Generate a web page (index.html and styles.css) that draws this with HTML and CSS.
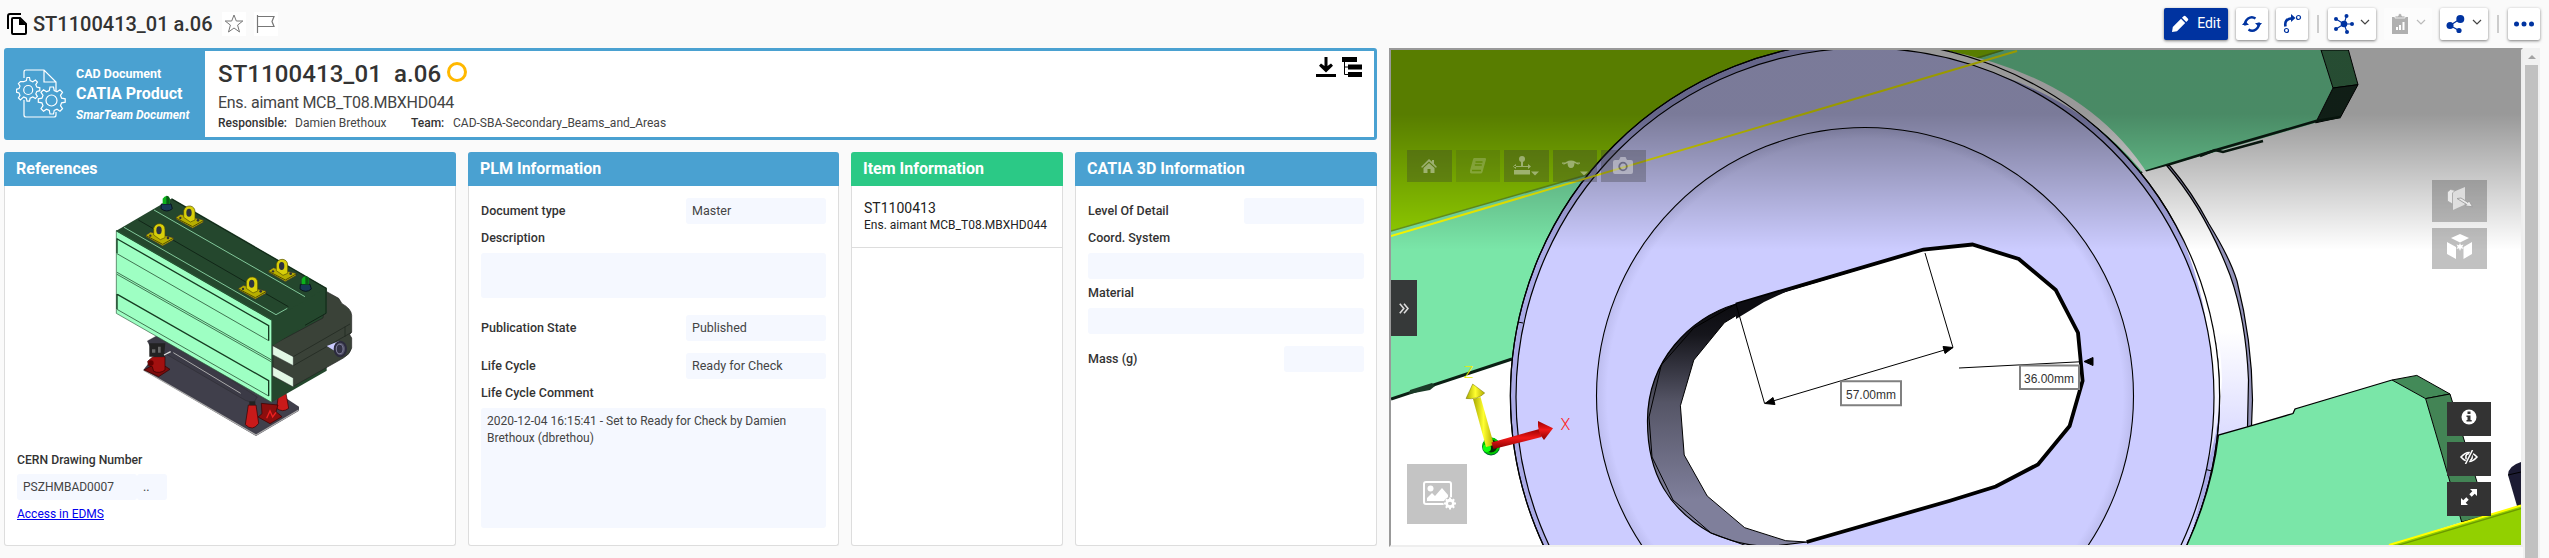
FILE: index.html
```html
<!DOCTYPE html>
<html lang="en">
<head>
<meta charset="utf-8">
<title>ST1100413_01 a.06</title>
<link rel="stylesheet" href="styles.css">
</head>
<body>
<header class="topbar">
  <svg class="ic-copy" width="20" height="22" viewBox="0 0 20 22"><path d="M1 16V3q0-2 2-2h11" fill="none" stroke="#000" stroke-width="2"/><path d="M6 5h7l6 6v9q0 1-1 1H6q-1 0-1-1V6q0-1 1-1z" fill="#fff" stroke="#000" stroke-width="2"/><path d="M12 5v7h7z"/></svg>
  <h1 class="page-title">ST1100413_01 a.06</h1>
  <span class="mini star"><svg width="24" height="24" viewBox="0 0 24 24"><path d="M12 3l2.300 6h6.500l-5.200 4.100 1.900 6.900-5.500-4-5.500 4 1.900-6.900L3.200 9h6.500z" fill="none" stroke="#777"/></svg></span>
  <span class="mini"><svg width="24" height="24" viewBox="0 0 24 24"><path d="M3.500 3v18M3.500 4.500H20l-2 5 2 5H3.500" fill="none" stroke="#777" stroke-width="1.200"/></svg></span>
  <nav class="actions">
    <button class="btn edit"><svg width="18" height="18" viewBox="0 0 18 18" fill="#fff"><path d="M1 17l.8-5L10 3.800 14.200 8 6 16.200zM11 2.800l1.600-1.600q1-1 2 0l2.200 2.200q1 1 0 2L15.200 7z"/></svg><span>Edit</span></button>
    <button class="btn sq"><svg width="20" height="20" viewBox="0 0 20 20"><path d="M3.500 11.500A6.500 6.500 0 0 1 13.500 4.600M16.500 8.500A6.500 6.500 0 0 1 6.500 15.400" fill="none" stroke="#0033a0" stroke-width="2.400"/><path d="M0 11l3.200-4 3.800 4zM13 9h7l-3.200 4z" fill="#0033a0"/></svg></button>
    <button class="btn sq"><svg width="20" height="20" viewBox="0 0 20 20"><path d="M3.500 12.500Q2 5 10 4.200" fill="none" stroke="#0033a0" stroke-width="2.600"/><path d="M9 0l4.500 4L9 8z" fill="#0033a0"/><circle cx="16.500" cy="3.500" r="2" fill="none" stroke="#0033a0" stroke-width="1.200"/><circle cx="4.500" cy="16.500" r="2" fill="none" stroke="#0033a0" stroke-width="1.200"/></svg></button>
    <i class="sep"></i>
    <button class="btn wide"><svg width="20" height="20" viewBox="0 0 20 20" fill="#0033a0"><path d="M2 5l8 5-8 5M12.500 2L10 10l3 8M10 10h8" fill="none" stroke="#0033a0" stroke-width="1.100"/><circle cx="10" cy="10" r="3.300"/><circle cx="2" cy="5" r="2"/><circle cx="2" cy="15" r="2"/><circle cx="12.500" cy="2" r="2"/><circle cx="13" cy="18" r="2"/><circle cx="18" cy="10" r="2"/></svg><svg class="chev" width="10" height="7" viewBox="0 0 10 7"><path d="M1 1l4 4 4-4" fill="none" stroke="#444" stroke-width="1.200"/></svg></button>
    <button class="btn wide off"><svg width="20" height="22" viewBox="0 0 20 22"><path d="M2 4h16v17H2z" fill="#b0b0b0"/><path d="M5 5V3h3q0-2.500 2-2.500T12 3h3v2z" fill="#b0b0b0" stroke="#fafafa" stroke-width=".8"/><path d="M7 17v-3M10 17v-5M13.500 17v-8" stroke="#fff" stroke-width="2"/></svg><svg class="chev" width="10" height="7" viewBox="0 0 10 7"><path d="M1 1l4 4 4-4" fill="none" stroke="#bbb" stroke-width="1.200"/></svg></button>
    <button class="btn wide"><svg width="20" height="20" viewBox="0 0 20 20" fill="#0033a0"><path d="M14 5L4 11.500l9 5" fill="none" stroke="#0033a0" stroke-width="1.300"/><circle cx="14.300" cy="5" r="4"/><circle cx="4" cy="11.500" r="3.500"/><circle cx="13" cy="16.500" r="2.600"/></svg><svg class="chev" width="10" height="7" viewBox="0 0 10 7"><path d="M1 1l4 4 4-4" fill="none" stroke="#444" stroke-width="1.200"/></svg></button>
    <i class="sep"></i>
    <button class="btn sq"><svg width="22" height="6" viewBox="0 0 22 6" fill="#0033a0"><circle cx="3.500" cy="3" r="2.500"/><circle cx="11" cy="3" r="2.500"/><circle cx="18.500" cy="3" r="2.500"/></svg></button>
  </nav>
</header>
<main class="main">
  <div class="left">
    <section class="banner">
      <div class="kind">
        <svg class="gears" width="50" height="50" viewBox="0 0 50 50" fill="none" stroke="#fff" stroke-width="1.200"><path d="M8 10V4q0-2 2-2h18l12 12v9M28 2v12h12M8 32v15q0 2 2 2h28q2 0 2-2v-3"/><path d="M11 9.500l2.500 0 .6 3 2.700 1.200 2.600-1.700 2 2-1.600 2.600 1 2.500 3 .7v2.900l-3 .7-1 2.500 1.600 2.600-2 2-2.600-1.600-2.700 1.200-.6 3h-2.500l-.6-3-2.700-1.200L4.400 32l-2-2L4 27.400l-1-2.500-2.500-.7v-2.900l2.500-.7 1-2.500-1.600-2.600 2-2L7.700 13.700l2.700-1.200z" fill="#4aa1d1"/><circle cx="12.200" cy="22" r="4.500"/><path d="M34 19h3.500l.7 3.600 2.800 1.200 3-2 2.500 2.500-2 3 1.100 2.800 3.600.7v3.400l-3.600.7-1.100 2.800 2 3L44 43.200l-3-2-2.800 1.200-.7 3.600H34l-.7-3.600-2.800-1.200-3 2-2.500-2.500 2-3-1.100-2.800-3.600-.7v-3.400l3.600-.7 1.100-2.800-2-3 2.500-2.500 3 2 2.800-1.200z" fill="#4aa1d1"/><circle cx="35.500" cy="32.500" r="5.500"/></svg>
        <div class="kind-text"><span class="k1">CAD Document</span><span class="k2">CATIA Product</span><span class="k3">SmarTeam Document</span></div>
      </div>
      <div class="ident">
        <div class="id-row"><span class="id-name">ST1100413_01</span><span class="id-rev">a.06</span><i class="ring"></i></div>
        <div class="id-desc">Ens. aimant MCB_T08.MBXHD044</div>
        <div class="id-meta"><b class="m-resp">Responsible:</b><span class="m-who">Damien Brethoux</span><b class="m-team">Team:</b><span class="m-area">CAD-SBA-Secondary_Beams_and_Areas</span></div>
      </div>
      <div class="tools">
        <svg width="20" height="20" viewBox="0 0 20 20"><path d="M8.500 0h3v9l3.500-2.500 2 2.300-7 6.700-7-6.700 2-2.300L8.500 9zM0 17h20v3H0z"/></svg>
        <svg width="20" height="20" viewBox="0 0 20 20"><path d="M0 0h15v5H0zM6 7.500h14v5H6zM6 15h14v5H6z"/><path d="M2.500 5v12.500H6M2.500 10H6" fill="none" stroke="#000"/></svg>
      </div>
    </section>
    <div class="cards">
      <section class="card c-ref">
        <h2>References</h2>
        <div class="body">
          <svg class="magnet" width="240" height="244" viewBox="339 159 720 732">
            <path d="M430 690L768 888 897 812 897 800 790 730 500 600z" fill="#403f4b"/><path d="M430 690L768 885 896 810" fill="none" stroke="#aaa" stroke-width="4"/>
            <path d="M442 603l40-22 290 190-12 18-24-8-240-140-30 8z" fill="#3b3a46" stroke="#222"/><path d="M520 638L722 760" stroke="#aaa" stroke-width="3"/>
            <path d="M432 690l44-24 34 22-34 22z" fill="#7a0c0c" stroke="#300" stroke-width="2"/><path d="M443 664l16-14h36v40q-16 12-34 4l-4-14-12-4z" fill="#a3100f" stroke="#300" stroke-width="2"/><circle cx="453" cy="669" r="8" fill="#600"/>
            <path d="M745 795h23l8 55q-18 26-40 4zM836 760h22l8 45q-18 14-36 0z" fill="#c81a1a" stroke="#300" stroke-width="2"/>
            <path d="M784 790l50 5-6 20 18 15-36 21-36-20 12-10z" fill="#8c0e0e" stroke="#300" stroke-width="2"/><path d="M800 835l10-22 8 18 10-14" fill="none" stroke="#e22" stroke-width="4"/>
            <path d="M748 784h18v12h-18z" fill="#222"/>
            <path d="M448 610h48l-4 40h-44z" fill="#222"/><path d="M492 645l20-10" stroke="#ddd" stroke-width="4"/><path d="M456 628h10v10h-10zM474 620h8v18h-8z" fill="#666"/>
            <path d="M349 272L516 175 980 443V692L815 787z" fill="#24472d"/><path d="M980 455l36 20 10 16q28 15 29 35v50l-6 8 6 10v30q-4 18-25 30l-150 85-61-30v-95l150-80z" fill="#3a4238" stroke="#222" stroke-width="2"/>
            <path d="M815 540L980 443V520L880 577 818 617z" fill="#24472d"/>
            <path d="M349 272L815 540V787L349 520z" fill="#9effc3" stroke="#2e5a3c" stroke-width="2"/>
            <path d="M352 297L806 557V602M351 295v45M352 463L806 722v46M351 462v45" fill="none" stroke="#163c22" stroke-width="4"/>
            <path d="M351 341L806 602M351 397L815 660M351 403L815 666M351 508L806 768" fill="none" stroke="#2d593b" stroke-width="2.500"/>
            <path d="M349 272L815 540" stroke="#265332" stroke-width="4"/><path d="M372 262L828 524M462 210L915 470M828 524L862 505" fill="none" stroke="#82c79a" stroke-width="3"/><path d="M415 240L865 500M516 178L978 445V520L915 556" fill="none" stroke="#112617" stroke-width="3"/>
            <path d="M818 617l62 33v27l-62-33zM818 680l62 34v27l-62-34z" fill="#e2f8e5" stroke="#222" stroke-width="1.500"/>
            <path d="M880 677l175-100M880 650l170-98M1035 560v30" fill="none" stroke="#1d241d" stroke-width="2"/><path d="M980 618l38-15v38z" fill="#ccf"/><ellipse cx="1021" cy="627" rx="17" ry="22" fill="#55546a" stroke="#2c2b3e" stroke-width="6"/><ellipse cx="1019" cy="627" rx="10" ry="14" fill="#333246" stroke="#9998b8" stroke-width="2"/>
            <g id="lug"><path d="M528 232l14-9 68 17v7l-32 18-50-28z" fill="#b7ae00" stroke="#333" stroke-width="2"/><path d="M528 234l50 26 32-18" fill="none" stroke="#554f00" stroke-width="3"/><path d="M551 232v-20q4-15 20-14 14 3 14 18v24l-14 6z" fill="#d8cf0a" stroke="#555000" stroke-width="2"/><ellipse cx="567" cy="218" rx="8" ry="12" fill="#2c3340"/><circle cx="541" cy="234" r="3.500" fill="#333"/><circle cx="594" cy="241" r="4" fill="#333"/></g>
            <use href="#lug" x="-90" y="53"/><use href="#lug" x="278" y="160"/><use href="#lug" x="188" y="213"/>
            <g id="knob"><path d="M484 192h29l4 14q-16 14-34 0z" fill="#173a55" stroke="#0a1520" stroke-width="3"/><path d="M488 192v-16q11-16 22 0v16z" fill="#0bb31b"/><path d="M499 167q9 0 10 9v16h-10z" fill="#0a5c17"/></g>
            <use href="#knob" x="417" y="241"/>
          </svg>
          <div class="label l-cern">CERN Drawing Number</div>
          <div class="pair"><span class="field f-num">PSZHMBAD0007</span><span class="field f-dots">..</span></div>
          <a class="link" href="#">Access in EDMS</a>
        </div>
      </section>
      <section class="card c-plm">
        <h2>PLM Information</h2>
        <div class="body">
          <div class="row"><span class="label">Document type</span><span class="field f-140">Master</span></div>
          <div class="label stack">Description</div>
          <div class="field f-desc"></div>
          <div class="row gap-17"><span class="label">Publication State</span><span class="field f-140">Published</span></div>
          <div class="row gap-12"><span class="label">Life Cycle</span><span class="field f-140">Ready for Check</span></div>
          <div class="label stack">Life Cycle Comment</div>
          <div class="field f-comment">2020-12-04 16:15:41 - Set to Ready for Check by Damien Brethoux (dbrethou)</div>
        </div>
      </section>
      <section class="card c-item green">
        <h2>Item Information</h2>
        <div class="item"><span class="item-id">ST1100413</span><span class="item-desc">Ens. aimant MCB_T08.MBXHD044</span></div>
      </section>
      <section class="card c-3d">
        <h2>CATIA 3D Information</h2>
        <div class="body">
          <div class="row"><span class="label">Level Of Detail</span><span class="field f-120"></span></div>
          <div class="label stack">Coord. System</div>
          <div class="field"></div>
          <div class="label stack">Material</div>
          <div class="field"></div>
          <div class="row gap-12"><span class="label">Mass (g)</span><span class="field f-80"></span></div>
        </div>
      </section>
    </div>
  </div>
  <section class="viewer">
    <svg class="scene" width="1130" height="495" viewBox="1391 50 1130 495">
      <defs>
        <linearGradient id="shade" gradientUnits="userSpaceOnUse" x1="0" y1="50" x2="0" y2="250"><stop offset="0" stop-opacity=".4"/><stop offset=".32" stop-opacity=".4"/><stop offset="1" stop-opacity="0"/></linearGradient>
        <linearGradient id="bore" gradientUnits="userSpaceOnUse" x1="0" y1="305" x2="0" y2="500"><stop offset="0" stop-color="#0c0c10"/><stop offset=".15" stop-color="#15151b"/><stop offset=".5" stop-color="#555566"/><stop offset="1" stop-color="#7f7f9b"/></linearGradient>
        <linearGradient id="haze" gradientUnits="userSpaceOnUse" x1="0" y1="330" x2="0" y2="435"><stop offset="0" stop-color="#fff"/><stop offset="1" stop-color="#dcdcff"/></linearGradient>
        <linearGradient id="rim" gradientUnits="userSpaceOnUse" x1="0" y1="170" x2="0" y2="500"><stop offset="0" stop-color="#fff"/><stop offset=".6" stop-color="#fff"/><stop offset="1" stop-color="#d2d2ff"/></linearGradient>
        <radialGradient id="step" gradientUnits="userSpaceOnUse" cx="1865" cy="396" r="268.500"><stop offset=".96" stop-color="#ccccff"/><stop offset="1" stop-color="#bdbdef"/></radialGradient>
        <linearGradient id="yel" x1="0" x2="1"><stop offset="0" stop-color="#a8a800"/><stop offset=".5" stop-color="#ffff30"/><stop offset="1" stop-color="#b0a800"/></linearGradient>
        <linearGradient id="red" x1="0" y1="0" x2="0" y2="1"><stop offset="0" stop-color="#900"/><stop offset=".45" stop-color="#f01818"/><stop offset="1" stop-color="#800"/></linearGradient>
      </defs>
      <path d="M1391 50h1130v495H1391z" fill="#fff"/>
      <path d="M1391 231L2003.500 50H2321L2333 88 2315.600 122.800 2219 151 2141 172.600 1900 300 1512 358.300 1391 399z" fill="#7ae6a8"/>
      <path d="M1391 50H2003.500L1978.600 58.700 1590 174 1391 231z" fill="#92d000"/>
      <path d="M1391 231L1590 174L2003.500 50" fill="none" stroke="#6a9a20" stroke-width="1.500"/>
      <path d="M2321 50h27.400L2358 84.700 2333 88z" fill="#407f54" stroke="#000"/>
      <path d="M2333 88l25-3.300-17.600 32.700-24.800 5.400z" fill="#1b3225" stroke="#000"/>
      <path d="M2141 173l75-23 100-29 24.400-4" fill="none" stroke="#0b2014" stroke-width="2.500"/>
      <path d="M2200 156l15-6 8 2 40-11" fill="none" stroke="#0b2014" stroke-width="2.500"/>
      <path d="M1391 399l121-40" stroke="#0b2014" stroke-width="3"/><path d="M1410 390l22-7 3 3-5 4-21 4z" fill="#1b3b28"/>
      <path d="M2170 165Q2252 280 2251 425L2218 436 2222 380Q2220 270 2141 173z" fill="url(#haze)"/>
      <path d="M2169.500 165.500Q2192 192 2209 224 2230 258 2237 281 2252 340 2252.500 400L2251.500 426 2247.500 427 2248.500 380Q2246 320 2230 275 2205 210 2167 166z" fill="#9292b8" stroke="#000" stroke-width="1.200"/>
      <circle cx="1865" cy="396" r="354.600" fill="#aaaae6" stroke="#000" stroke-width="1.200"/>
      <path d="M1905 50h39Q2100 80 2160 195 2222 290 2219.500 396 2219 435 2205 470L2199 469 2213 400Q2210 150 2000 75z" fill="url(#rim)"/>
      <path d="M2205 470h-7q-10 40-28 76h17q12-32 18-76z" fill="#d2d2ff"/>
      <circle cx="1865" cy="396" r="354.600" fill="none" stroke="#000" stroke-width="1.200"/>
      <circle cx="1865" cy="397" r="349" fill="#ccccff" stroke="#000" stroke-width="1.200"/>
      <path d="M1518 322l5 1M2206 469.500l6 1.500" stroke="#000"/>
      <circle cx="1865" cy="396" r="268.500" fill="url(#step)" stroke="#000" stroke-width="1.100"/>
      <path d="M1736 304C1690 318 1648 360 1647.500 420 1647 475 1670 510 1711 533 1740 545 1760 548 1782 545L1806.700 542 1850 450 1780 296z" fill="url(#bore)" stroke="#000" stroke-width="1.200"/>
      <path d="M1736 304L1693.800 328 1661.300 365 1649 417 1652 457 1673 500 1711 533 1747 546" fill="none" stroke="#000"/>
      <path d="M1766.500 297L1923.400 250 1972.400 244.500 2018.800 259 2055.800 290 2078 332.700 2082.600 380.800 2069.600 426 2038 464.400 1995.800 486.500 1950 500.700 1806.700 542 1785.700 540.700 1744.700 527.700 1707.200 496 1684.200 455 1680.400 405.700 1693.800 360 1724.400 322.700z" fill="#fff" stroke="#000" stroke-width="1"/>
      <path d="M1736 304.500L1923.400 249.500 1972.400 244.500 2018.800 259 2055.800 290 2078 332.700 2082.600 380.800 2069.600 426 2038 464.400 1995.800 486.500 1950 500.700 1806.700 542" fill="none" stroke="#000" stroke-width="3.800"/>
      <path d="M1736 304l60-17-32 15-28 17z" fill="#0d0d12"/>
      <path d="M2218.500 435L2250 426 2293 413.500 2295 409 2392 380 2425.600 398.600 2450 482 2462 522 2391 545H2187Q2212 490 2218.500 435z" fill="#7ae6a8"/>
      <path d="M2392 380l24.800-4.600L2450 394l-24.400 4.600z" fill="#438a58" stroke="#000"/>
      <path d="M2425.600 398.600l24.400-4.600 13.500 44L2477 482l8 34-23.300 6L2450 482z" fill="#438455" stroke="#000"/>
      <path d="M2187 545Q2212 490 2218.500 435L2250 426 2293 413.500 2295 409 2392 380" fill="none" stroke="#000" stroke-width="1.300"/>
      <path d="M2508 475q0-9 13-13v44h-4z" fill="#1c1b33"/><path d="M2508 475l13-3" stroke="#000"/>
      <path d="M2390 545L2521 505.500V545z" fill="#92d000"/><path d="M2396 546L2521 508.500" stroke="#6b9900" stroke-width="1.300"/><path d="M2389 545L2521 505.500" stroke="#ff0" stroke-width="2"/>
      <path d="M1391 236L2017 51" stroke="#ff0" stroke-width="2"/>
      <path d="M1391 50h1130v200H1391z" fill="url(#shade)"/>
      <g stroke="#000" fill="#000"><path d="M1736 304L1764.600 403.500M1925 253L1953 347.500M1764.600 403.500L1953 347.500" fill="none"/><path d="M1765 403.500l8-6 2 7zM1953 347.500l-8 6-2-7zM1959 368L2082 361.700M2084 361.500l9-4v8z"/></g>
      <g fill="#fff" stroke="#808080" stroke-width="2"><path d="M1841 381.300h60v24h-60zM2020 365.500h59v23.500h-59z"/></g>
      <g class="dim"><text x="1846" y="398.500">57.00mm</text><text x="2024" y="382.500">36.00mm</text></g>
      <circle cx="1491" cy="446.500" r="9" fill="#063"/><circle cx="1491" cy="446" r="7.500" fill="#052d05" stroke="#0c0" stroke-width="2"/><circle cx="1487" cy="448" r="4" fill="#1f1"/>
      <path d="M1473 399l7.500-2 13.500 48-8 2z" fill="url(#yel)"/><path d="M1472.700 384l12 9q-7 7-18.700 5.500z" fill="url(#yel)" stroke="#777700" stroke-width=".5"/>
      <path d="M1491.500 442.500l48-13.500 2 8-48 12z" fill="url(#red)"/><path d="M1553 428.300l-15-7.300q-1 11 6 19z" fill="url(#red)"/>
      <g class="axis"><text x="1560.500" y="430" fill="#f22">X</text><text x="1464" y="377.500" fill="#ee0">Z</text></g>
    </svg>
    <div class="vtools">
      <span class="vt"><svg width="16" height="14" viewBox="0 0 16 14"><path d="M8 0l3 2.800V1h2v3.700L16 8l-1.200.8L8 2.500 1.200 8.800 0 8zM8 4l5.500 5v5H9.500v-4h-3v4H2.500V9z"/></svg></span>
      <span class="vt dim-btn"><svg width="18" height="16" viewBox="0 0 18 16"><path d="M5 0h11q1.500 0 1 1.500L13.500 14q-.5 1.500-2 1.500H2.500Q.5 15 1 12.500L4 1.500Q4.300 0 5 0z"/><path d="M6.500 4h7M5.800 7h7M3 12.500h9" stroke="#5f8a08" stroke-width="1.300"/></svg></span>
      <span class="vt"><svg width="26" height="20" viewBox="0 0 26 20"><circle cx="9" cy="3" r="3"/><path d="M8 5h2v5h7v1H1v-1h7zM1 14h16v4.500H1zM3 8L0 10.500l3 2.500zM15 8l3 2.500-3 2.500zM18 15.500h8l-4 4z"/></svg></span>
      <span class="vt"><svg width="26" height="20" viewBox="0 0 26 20"><path d="M1 9Q4 4.500 9 4.500T17 9l-4.500-2Q12.500 12 9 12T5.500 7zM0 6.500h4v1.300H0zM14 6.500h4v1.300h-4zM18 15.500h8l-4 4z"/></svg></span>
      <span class="vt cam"><svg width="20" height="18" viewBox="0 0 20 18"><path d="M6 3l1.500-3h5L14 3h4q2 0 2 2v10q0 2-2 2H2q-2 0-2-2V5q0-2 2-2z"/><circle cx="10" cy="9.500" r="3.800" fill="none" stroke="#55556c" stroke-width="1.800"/></svg></span>
    </div>
    <span class="handle"><svg width="10" height="11" viewBox="0 0 10 11"><path d="M.8.800l4 4.700-4 4.700M5 .8l4 4.700-4 4.700" fill="none" stroke="#ddd" stroke-width="1.600"/></svg></span>
    <span class="shot"><svg width="34" height="30" viewBox="0 0 34 30"><rect x="1" y="1" width="27" height="22" rx="2" fill="none" stroke="#fff" stroke-width="2"/><circle cx="7.500" cy="7.500" r="3"/><path d="M4 20v-3l5-5 3 3 7-8 6 7v6z"/><circle cx="27" cy="22.500" r="6.500" fill="#c4c4c4"/><circle cx="27" cy="22.500" r="3.200" fill="none" stroke="#fff" stroke-width="3"/><path d="M27 16.500v12M21 22.500h3M30 22.500h3M22.800 18.300l2 2M29.200 24.700l2 2M31.200 18.300l-2 2M24.800 24.700l-2 2" stroke="#fff" stroke-width="2"/><circle cx="27" cy="22.500" r="1.800" fill="#c4c4c4"/></svg></span>
    <div class="vside">
      <span class="vs"><svg width="26" height="24" viewBox="0 0 26 24"><path d="M6 5L18 0v17l-1 1-11 5z" opacity=".85"/><path d="M.5 5l3-2.500L8 3.500 5.500 6v11l-5-3z" stroke="#a5a5a5" stroke-width=".7"/><path d="M10 11.500l4-.5 7 4.500 1-1.800 3.500 6-7-.7 1.200-1.500z" stroke="#999" stroke-width=".9"/></svg></span>
      <span class="vs"><svg width="26" height="25" viewBox="0 0 26 25"><path d="M13 0l9 4-9 4.500L4 4zM0 8l9 5v12l-9-5zM25 8v12l-8.500 5V13z"/><path d="M13 9l1 2.300 2.500-.8-1.200 2.300 1.200 2.300-2.500-.8L13 17l-1-2.700-2.500.8 1.200-2.300-1.200-2.300 2.500.8z"/></svg></span>
    </div>
    <div class="vdark">
      <span class="vd"><svg width="16" height="16" viewBox="0 0 16 16"><circle cx="8" cy="8" r="7.500" fill="#fff"/><path d="M6.500 2.500h3v2.500h-3zM5.500 6.500h4V11h1.200v1.500h-5.200V11h1V8h-1z" fill="#333"/></svg></span>
      <span class="vd"><svg width="18" height="14" viewBox="0 0 18 14"><path d="M1 7Q9-2 17 7 9 16 1 7z" fill="none" stroke="#fff" stroke-width="1.600"/><circle cx="9" cy="7" r="3.200" fill="none" stroke="#fff" stroke-width="1.500"/><path d="M13 0L6 14" stroke="#333" stroke-width="3.500"/><path d="M12.500 0L5.500 14" stroke="#fff" stroke-width="1.500"/></svg></span>
      <span class="vd"><svg width="16" height="16" viewBox="0 0 16 16"><path d="M9 0h7v7l-2.300-2.300-3 3-2.400-2.400 3-3zM7 16H0V9l2.300 2.300 3-3 2.400 2.400-3 3z" fill="#fff"/></svg></span>
    </div>
  </section>
  <div class="scroll"><i class="up"></i><i class="thumb"></i></div>
</main>
</body>
</html>
```
FILE: styles.css
```css
* { box-sizing: border-box; }
body { margin: 0; width: 2549px; height: 558px; overflow: hidden; background: #fafafa; font-family: Roboto, "Liberation Sans", sans-serif; font-size: 12px; color: #333; }
svg { display: block; flex: none; }
.topbar { display: flex; height: 48px; padding-left: 7px; align-items: center; }
.page-title { width: 182px; margin: 0 8px 0 6px; font-size: 20px; font-weight: 500; line-height: 24px; white-space: nowrap; }
.mini { width: 24px; height: 24px; background: #fff; margin-right: 8px; }
.star { margin-left: -1px; }
.actions { display: flex; align-items: center; gap: 8px; margin-left: auto; padding-right: 9px; height: 48px; }
.btn { display: flex; align-items: center; justify-content: center; height: 32px; padding: 0; border: 0; border-radius: 2px; background: #fff; box-shadow: 0 1px 3px rgba(0,0,0,.5); font: 14px Roboto, sans-serif; }
.sq { width: 32px; }
.wide { width: 48px; gap: 6px; }
.chev { margin-top: -4px; }
.off { background: #fcfcfc; box-shadow: none; }
.edit { width: 64px; gap: 8px; background: #0033a0; color: #fff; }
.edit span { margin-top: -2px; }
.sep { width: 2px; height: 18px; margin: 0 1px; background: #ccc; }
.main { display: flex; height: 510px; padding-left: 4px; }
.left { width: 1373px; margin-right: 12px; }
.banner { display: flex; height: 92px; border: 3px solid #4aa1d1; border-radius: 3px; background: #fff; }
.kind { display: flex; width: 198px; background: #4aa1d1; color: #fff; font-weight: 700; }
.gears { margin: 17px 0 0 9px; }
.kind-text { display: flex; flex-direction: column; margin: 15px 0 0 10px; white-space: nowrap; }
.k1 { font-size: 12.500px; line-height: 16px; }
.k2 { font-size: 16px; line-height: 24px; }
.k3 { font-size: 12px; line-height: 18px; font-style: italic; }
.ident { flex: 1; padding: 7px 0 0 13px; white-space: nowrap; }
.id-row { display: flex; height: 32px; align-items: center; font-size: 24px; font-weight: 500; letter-spacing: .1px; }
.id-name { width: 176px; }
.id-rev { width: 53px; }
.ring { width: 20px; height: 20px; margin-top: -5px; border: 3px solid #ffb800; border-radius: 50%; }
.id-desc { font-size: 16px; line-height: 26px; letter-spacing: -.28px; color: #444; }
.id-meta { display: flex; font-size: 12px; line-height: 14px; color: #444; }
.id-meta b { font-weight: 500; color: #333; }
.m-resp { width: 77px; }
.m-who { width: 116px; }
.m-team { width: 42px; }
.tools { display: flex; gap: 6px; padding: 6px 12px 0 0; }
.cards { display: flex; gap: 12px; margin-top: 12px; }
.card { height: 394px; border: 1px solid #ddd; border-top: 0; border-radius: 3px; background: #fff; }
.card h2 { height: 34px; margin: 0 -1px; padding-left: 12px; border-radius: 3px 3px 0 0; background: #4aa1d1; color: #fff; font-size: 16px; font-weight: 700; line-height: 33px; }
.green h2 { background: #2bc986; }
.c-ref { width: 452px; }
.c-plm { width: 371px; }
.c-item { width: 212px; }
.c-3d { width: 302px; }
.body { padding: 12px 12px 0; }
.c-ref .body { padding-top: 7px; }
.magnet { margin-left: 96px; }
.label { font-size: 12.500px; font-weight: 500; color: #333; white-space: nowrap; }
.l-cern { margin-top: 14px; height: 23px; font-size: 12.200px; line-height: 18px; }
.pair { display: flex; }
.field { display: block; height: 26px; padding: 0 6px; border-radius: 3px; background: #f5f8ff; color: #444; font-size: 12.500px; line-height: 26px; white-space: nowrap; }
.f-num { width: 120px; font-size: 12px; }
.f-dots { width: 30px; }
.link { display: block; margin-top: 6px; font-size: 12px; line-height: 16px; color: #0000ee; }
.row { display: flex; justify-content: space-between; align-items: center; height: 26px; }
.row .label { padding-bottom: 2px; }
.stack { height: 29px; line-height: 27px; }
.gap-17 { margin-top: 17px; }
.gap-12 { margin-top: 12px; }
.f-140 { width: 140px; }
.f-120 { width: 120px; }
.f-80 { width: 80px; }
.f-desc { height: 45px; }
.f-comment { height: 120px; padding-top: 5px; font-size: 12px; line-height: 17px; white-space: normal; }
.item { display: flex; flex-direction: column; height: 62px; padding: 13px 12px 0; border-bottom: 1px solid #ddd; color: #222; white-space: nowrap; }
.item-id { font-size: 14px; line-height: 18px; }
.item-desc { font-size: 12px; line-height: 17px; }
.viewer { position: relative; width: 1134px; height: 499px; border: 2px solid #999; border-right-color: #eee; border-bottom-color: #eee; overflow: hidden; }
.dim { font: 12px "Liberation Sans", sans-serif; fill: #333; }
.axis { font: 300 16px Roboto, sans-serif; }
.vtools { position: absolute; left: 16px; top: 100px; display: flex; gap: 4px; }
.vt { display: flex; width: 44.500px; height: 32px; align-items: center; justify-content: center; background: rgba(50,50,50,.3); }
.vt svg { fill: #fff; opacity: .4; }
.dim-btn { background: rgba(50,50,50,.15); }
.dim-btn svg { opacity: .2; }
.handle { position: absolute; left: 0; top: 230px; width: 26px; height: 56px; display: flex; align-items: center; justify-content: center; background: #363939; }
.shot { position: absolute; left: 16px; top: 414px; width: 60px; height: 60px; display: flex; align-items: center; justify-content: center; padding: 4px 0 0 6px; background: #c4c4c4; }
.shot svg { fill: #fff; }
.vside { position: absolute; right: 34px; top: 130px; display: flex; flex-direction: column; gap: 6px; }
.vs { display: flex; width: 55px; height: 41.500px; align-items: center; justify-content: center; padding-bottom: 4px; background: rgba(50,50,50,.3); }
.vs svg { fill: #fff; }
.vs:first-child svg { opacity: .75; }
.vdark { position: absolute; right: 30px; top: 352px; display: flex; flex-direction: column; gap: 6px; }
.vd { display: flex; width: 44px; height: 34px; align-items: center; justify-content: center; padding-bottom: 4px; background: #333; }
.scroll { display: flex; flex-direction: column; align-items: center; width: 17px; background: #f1f1f1; }
.up { margin: 7px 0 6px; border: 4px solid transparent; border-top: 0; border-bottom-color: #a3a3a3; }
.thumb { flex: 1; width: 13px; background: #c1c1c1; }
```
